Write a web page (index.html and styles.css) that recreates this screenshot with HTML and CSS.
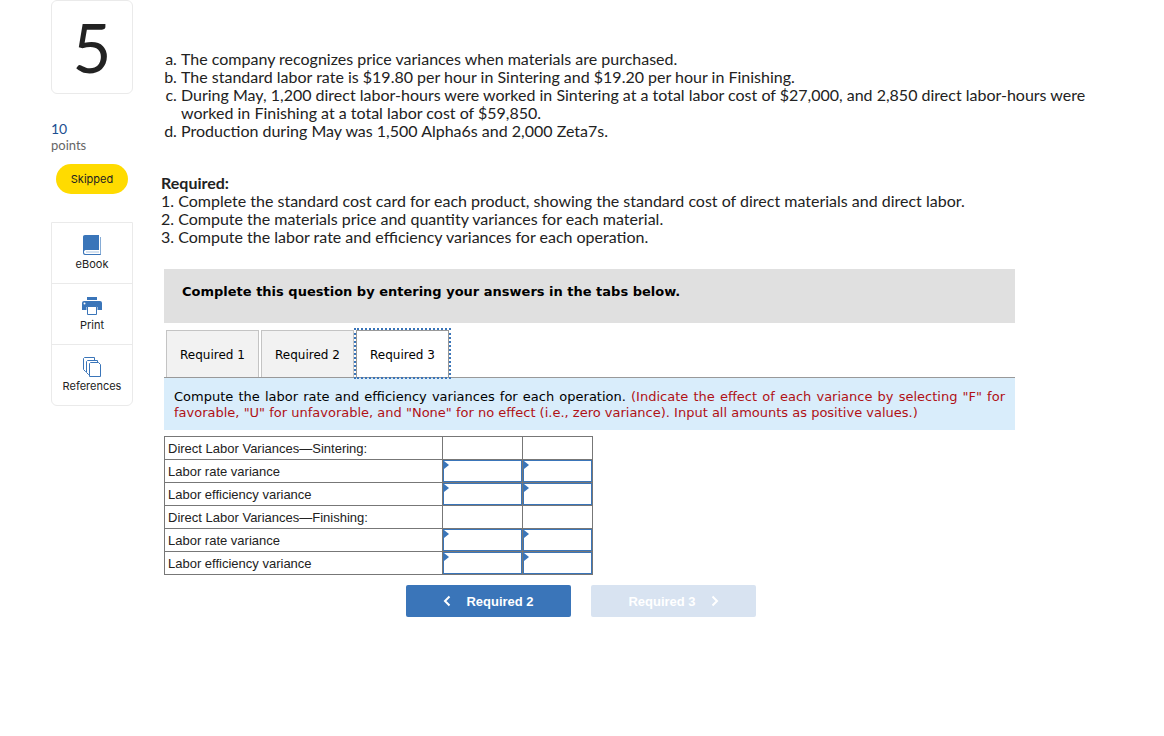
FILE: index.html
```
<!DOCTYPE html>
<html lang="en">
<head>
    <meta charset="UTF-8">
    <meta name="viewport" content="width=device-width, initial-scale=1.0">
    <title>Question 5</title>
    <link rel="stylesheet" href="styles.css">
</head>
<body>

    <div class="page">
        <aside class="sidebar">
            <div class="number">5</div>
            <div class="points">
                <span class="points-value">10</span>
                <span class="points-label">points</span>
            </div>
            <div class="status">Skipped</div>
            <nav class="tools">
                <button class="tool">
                    <svg width="20" height="20" viewBox="0 0 20 20">
                        <path d="M3 0H17V15H3.5C1.500 15 1.500 19 3.500 19H18V2H19V20H3C1.500 20 1 19 1 17.500V2C1 .7 1.700 0 3 0Z" fill="#3a75b9"/>
                        <path d="M4 17H17" stroke="#a9c4e2" stroke-width="1"/>
                        <path d="M18.500 2V19.500" stroke="#86acd6" stroke-width="1"/>
                    </svg>
                    <span>eBook</span>
                </button>
                <button class="tool">
                    <svg width="20" height="20" viewBox="0 0 20 20">
                        <path d="M5 1H15V4H5ZM2 5H18Q20 5 20 7V14H15.500V11H4.500V14H0V7Q0 5 2 5Z" fill="#3a75b9"/>
                        <circle cx="2.500" cy="7.500" r="1" fill="#fff"/>
                        <path d="M5.500 10.500H14.500V18.500H5.500Z" fill="#fff" stroke="#3a75b9"/>
                    </svg>
                    <span>Print</span>
                </button>
                <button class="tool">
                    <svg width="20" height="20" viewBox="0 0 20 20" fill="#fff" stroke="#3a75b9">
                        <path d="M2.500 .5H12.500V14.500H3.500L1.500 12.500V1.500Z"/>
                        <path d="M5.500 3.500H15.500V17.500H6.500L4.500 15.500V4.500Z"/>
                        <path d="M8.500 5.500H16.500L18.500 7.500V19.500H7.500V6.500Z"/>
                    </svg>
                    <span>References</span>
                </button>
            </nav>
        </aside>

        <main class="content">
            <ol class="facts">
                <li>The company recognizes price variances when materials are purchased.</li>
                <li>The standard labor rate is $19.80 per hour in Sintering and $19.20 per hour in Finishing.</li>
                <li>During May, 1,200 direct labor-hours were worked in Sintering at a total labor cost of $27,000, and 2,850 direct labor-hours were worked in Finishing at a total labor cost of $59,850.</li>
                <li>Production during May was 1,500 Alpha6s and 2,000 Zeta7s.</li>
            </ol>

            <section class="required">
                <strong>Required:</strong>
                <div>1. Complete the standard cost card for each product, showing the standard cost of direct materials and direct labor.</div>
                <div>2. Compute the materials price and quantity variances for each material.</div>
                <div>3. Compute the labor rate and efficiency variances for each operation.</div>
            </section>

            <section class="worksheet">
                <div class="banner">Complete this question by entering your answers in the tabs below.</div>
                <div class="tabs" role="tablist">
                    <button class="tab" role="tab">Required 1</button>
                    <button class="tab" role="tab">Required 2</button>
                    <button class="tab active" role="tab" aria-selected="true">Required 3</button>
                </div>
                <p class="instruction">Compute the labor rate and efficiency variances for each operation. <span class="hint">(Indicate the effect of each variance by selecting "F" for favorable, "U" for unfavorable, and "None" for no effect (i.e., zero variance). Input all amounts as positive values.)</span></p>

                <table class="answers">
                    <tr>
                        <th>Direct Labor Variances—Sintering:</th>
                        <td class="amount"></td>
                        <td class="effect"></td>
                    </tr>
                    <tr>
                        <th id="sr">Labor rate variance</th>
                        <td class="entry"><input class="field" type="text" aria-labelledby="sr"></td>
                        <td class="entry"><select class="field" aria-labelledby="sr"><option></option></select></td>
                    </tr>
                    <tr>
                        <th id="se">Labor efficiency variance</th>
                        <td class="entry"><input class="field" type="text" aria-labelledby="se"></td>
                        <td class="entry"><select class="field" aria-labelledby="se"><option></option></select></td>
                    </tr>
                    <tr>
                        <th>Direct Labor Variances—Finishing:</th>
                        <td></td>
                        <td></td>
                    </tr>
                    <tr>
                        <th id="fr">Labor rate variance</th>
                        <td class="entry"><input class="field" type="text" aria-labelledby="fr"></td>
                        <td class="entry"><select class="field" aria-labelledby="fr"><option></option></select></td>
                    </tr>
                    <tr>
                        <th id="fe">Labor efficiency variance</th>
                        <td class="entry"><input class="field" type="text" aria-labelledby="fe"></td>
                        <td class="entry"><select class="field" aria-labelledby="fe"><option></option></select></td>
                    </tr>
                </table>

                <div class="pager">
                    <button class="step">
                        <svg width="8" height="12" viewBox="0 0 8 12"><path d="M6.500 1.500L2 6L6.500 10.500" fill="none" stroke="#fff" stroke-width="2"/></svg>
                        Required 2
                    </button>
                    <button class="step" disabled>
                        Required 3
                        <svg width="8" height="12" viewBox="0 0 8 12"><path d="M1.500 1.500L6 6L1.500 10.500" fill="none" stroke="#fff" stroke-width="2"/></svg>
                    </button>
                </div>
            </section>
        </main>
    </div>

</body>
</html>
```
FILE: styles.css
```
* {
    box-sizing: border-box;
}

body {
    margin: 0;
    background-color: #fff;
    color: #222;
    font-family: Lato, sans-serif;
    font-size: 16px;
    line-height: 18px;
}

button {
    font-family: inherit;
    margin: 0;
    cursor: pointer;
}

.page {
    display: flex;
    align-items: flex-start;
    gap: 28px;
    padding: 0 64px 40px 51px;
}

.sidebar {
    flex: 0 0 82px;
    display: flex;
    flex-direction: column;
}

.number {
    height: 94px;
    border: 1px solid #eaeaea;
    border-radius: 6px;
    font-size: 67px;
    line-height: 92px;
    text-align: center;
}

.points {
    display: flex;
    flex-direction: column;
    margin-top: 27px;
    font-size: 14px;
    line-height: 16px;
}

.points-value {
    color: #1c4f91;
}

.points-label {
    color: #666;
    font-size: 13px;
}

.status {
    align-self: center;
    width: 72px;
    margin-top: 11px;
    border-radius: 15px;
    background-color: #ffdb00;
    font-family: Inter, sans-serif;
    font-size: 11px;
    line-height: 30px;
    text-align: center;
}

.tools {
    display: flex;
    flex-direction: column;
    margin-top: 28px;
    border: 1px solid #eaeaea;
    border-radius: 0 0 6px 6px;
}

.tool {
    display: flex;
    flex-direction: column;
    align-items: center;
    height: 60px;
    padding: 12px 0 0;
    border: none;
    background: none;
    color: #222;
    font-family: Inter, sans-serif;
    font-size: 11px;
    line-height: 18px;
}

.tool + .tool {
    height: 61px;
    border-top: 1px solid #eaeaea;
}

.content {
    flex: 1;
    min-width: 0;
}

.facts {
    margin: 50px 0 0;
    padding-left: 20px;
    list-style: lower-alpha;
}

.required {
    margin-top: 34px;
}

.worksheet {
    max-width: 854px;
    margin-top: 23px;
    padding-left: 3px;
    color: #000;
    font-family: "DejaVu Sans", sans-serif;
    font-size: 13px;
    line-height: 16px;
}

.banner {
    height: 54px;
    padding: 15px 18px;
    background-color: #e0e0e0;
    font-weight: bold;
}

.tabs {
    display: flex;
    gap: 2px;
    margin-top: 7px;
    padding-left: 2px;
}

.tab {
    width: 93px;
    height: 47px;
    padding: 2px 0 0;
    border: 1px solid #c4c4c4;
    border-bottom: none;
    background-color: #f2f2f2;
    color: #000;
    font-size: 12px;
}

.tab.active {
    border-color: #999;
    background-color: #fff;
    outline: 2px dotted #3a75b9;
}

.instruction {
    margin: 0;
    padding: 11px 10px 9px;
    border-top: 1px solid #999;
    background-color: #d9edfb;
    text-align: justify;
}

.hint {
    color: #b01116;
}

.answers {
    margin-top: 6px;
    border-collapse: collapse;
    color: #222;
    font-family: "Liberation Sans", sans-serif;
}

.answers th,
.answers td {
    height: 23px;
    padding: 0;
    border: 1px solid #777;
}

.answers th {
    width: 278px;
    padding: 2px 3px 0;
    font-weight: normal;
    text-align: left;
}

.answers .amount {
    width: 80px;
}

.answers .effect {
    width: 70px;
}

.entry {
    position: relative;
}

/* small marker in the corner of an editable cell */
.entry::before {
    content: "";
    position: absolute;
    top: 1px;
    left: 1px;
    border: solid transparent;
    border-width: 4px 0 4px 5px;
    border-left-color: #3a75b9;
}

.field {
    display: block;
    width: 100%;
    height: 22px;
    padding: 0 6px;
    border: 1px solid #3a75b9;
    border-radius: 0;
    background-color: #fff;
    font-family: inherit;
    font-size: 13px;
    appearance: none;
}

.pager {
    display: flex;
    justify-content: center;
    gap: 20px;
    margin-top: 10px;
    padding-right: 17px;
}

.step {
    display: flex;
    align-items: center;
    justify-content: center;
    gap: 15px;
    width: 165px;
    height: 32px;
    padding: 0;
    border: none;
    border-radius: 2px;
    background-color: #3a75b9;
    color: #fff;
    font-family: "Liberation Sans", sans-serif;
    font-size: 13px;
    font-weight: bold;
}

.step:disabled {
    background-color: #d8e3f1;
}
```
